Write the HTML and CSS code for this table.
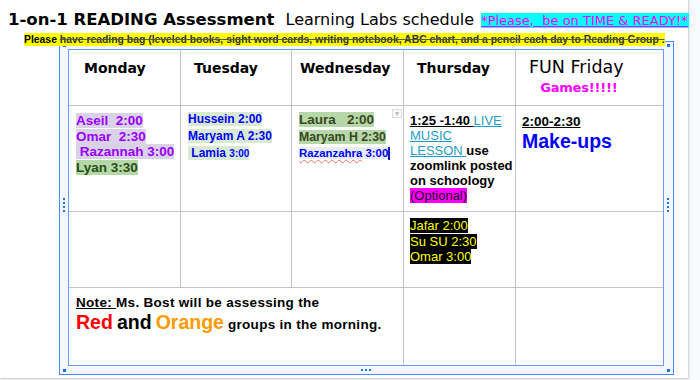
FILE: index.html
```html
<!DOCTYPE html>
<html>
<head>
<meta charset="utf-8">
<link rel="stylesheet" href="styles.css">
</head>
<body>
<div class="page">
  <div class="title">
    <span class="t-main">1-on-1 READING Assessment</span>
    <span class="t-sub">Learning Labs schedule</span>
    <span class="t-hl">*Please,&nbsp; be on TIME &amp; READY!*</span>
  </div>
  <div class="bag"><span>Please </span><span class="strike">have reading bag (leveled books, sight word cards, writing notebook, ABC chart, and a pencil each day to Reading Group .</span></div>
  <div class="frame">
    <div class="grid">
      <div class="cell head h-mon">Monday</div>
      <div class="cell head h-tue">Tuesday</div>
      <div class="cell head h-wed">Wednesday</div>
      <div class="cell head h-thu">Thursday</div>
      <div class="cell head h-fri last-col">
        <div class="fri-wrap">
          <div class="fun">FUN Friday</div>
          <div class="games">Games!!!!!</div>
        </div>
      </div>

      <div class="cell mon">
        <div><span class="lav">Aseil&nbsp; 2:00</span></div>
        <div><span class="lav">Omar&nbsp; 2:30</span></div>
        <div><span class="lav">&nbsp;Razannah 3:00</span></div>
        <div><span class="grn">Lyan 3:30</span></div>
      </div>
      <div class="cell tue">
        <div><span class="lg">Hussein 2:00</span></div>
        <div><span class="lg">Maryam A 2:30</span></div>
        <div><span class="lg">&nbsp;Lamia <small class="sm">3:00</small></span></div>
      </div>
      <div class="cell wed">
        <span class="dd">&#9662;</span>
        <div class="w1"><span class="grn2">Laura&nbsp;&nbsp; 2:00</span></div>
        <div class="w2"><span class="grn2">Maryam H 2:30</span></div>
        <div class="w3"><span class="pale"><span class="squig">Razanzahra</span> 3:00</span><span class="caret"></span></div>
      </div>
      <div class="cell thu">
        <span class="u">1:25 -1:40 </span><a class="link">LIVE<br>MUSIC<br>LESSON </a> use<br>zoomlink posted<br>on schoology<br><span class="opt">(Optional)</span>
      </div>
      <div class="cell fri last-col">
        <div class="fri-time"><span class="u">2:00-2:30</span></div>
        <div class="makeups">Make-ups</div>
      </div>

      <div class="cell"></div>
      <div class="cell"></div>
      <div class="cell"></div>
      <div class="cell thu2">
        <div><span class="blk">Jafar 2:00</span></div>
        <div><span class="blk">Su SU 2:30</span></div>
        <div><span class="blk">Omar 3:00</span></div>
      </div>
      <div class="cell last-col"></div>

      <div class="cell note last-row">
        <div class="n1"><span class="u">Note: </span>Ms. Bost will be assessing the</div>
        <div class="n2"><span class="big red">Red</span> <span class="big">and</span> <span class="big orange">Orange</span> groups in the morning.</div>
      </div>
      <div class="cell last-row"></div>
      <div class="cell last-row last-col"></div>
    </div>
    <span class="hd sq tl"></span>
    <span class="hd sq tr"></span>
    <span class="hd sq bl"></span>
    <span class="hd sq br"></span>
    <span class="hd vdots ml"></span>
    <span class="hd vdots mr"></span>
    <span class="hd hdots mt"></span>
    <span class="hd hdots mb"></span>
  </div>
</div>
</body>
</html>
```

FILE: styles.css
```css
* { box-sizing: border-box; }
html, body { margin: 0; padding: 0; }
body {
  background: #f8f9fa;
  width: 700px;
  height: 380px;
  overflow: hidden;
}
.page {
  width: 688px;
  height: 378px;
  background: #ffffff;
  box-shadow: 1px 0 0 #d6d6d6, 0 1px 0 #d0d0d0, 1px 1px 2px rgba(0,0,0,0.15);
  white-space: nowrap;
}
.title {
  height: 33px;
  padding: 10px 0 0 8px;
  line-height: 20px;
  font-family: "DejaVu Sans", sans-serif;
  color: #000;
}
.t-main {
  font-weight: bold;
  font-size: 16.5px;
}
.t-sub {
  font-size: 16px;
  margin-left: 6px;
}
.t-hl {
  font-size: 13px;
  background: #00ffff;
  color: #ff00ff;
  text-decoration: underline;
  margin-left: 2px;
  padding-right: 1px;
}
.bag {
  position: relative;
  z-index: 2;
  width: fit-content;
  margin-left: 24px;
  height: 13px;
  line-height: 13px;
  background: #ffff00;
  font-family: "Liberation Sans", Arial, sans-serif;
  font-weight: bold;
  font-size: 10.4px;
  color: #000;
}
.strike {
  text-decoration: line-through;
  text-decoration-color: #555;
  color: #333;
}
.frame {
  position: relative;
  margin: -5px 0 0 59px;
  width: 615px;
  height: 334px;
  border: 1px solid #4a89f3;
  background: #f4f8fe;
  padding: 7px 9px 8px 8px;
}
.grid {
  display: grid;
  grid-template-columns: 112px 111px 112px 112px 147px;
  grid-template-rows: 56px 106px 76px 77px;
  width: 596px;
  height: 317px;
  border: 1px solid #6a9cf0;
  background: #fff;
  font-family: "Liberation Sans", Arial, sans-serif;
  font-weight: bold;
  color: #000;
}
.cell {
  position: relative;
  border-right: 1px solid #c4c4c4;
  border-bottom: 1px solid #c4c4c4;
  padding: 7px 2px 0 7px;
  white-space: nowrap;
}
.last-col { border-right: none; }
.last-row { border-bottom: none; }

.head {
  font-family: "DejaVu Sans", sans-serif;
  font-weight: bold;
  font-size: 14px;
  line-height: 16px;
  padding-top: 10px;
}
.h-mon { padding-left: 15px; }
.h-tue { padding-left: 13px; }
.h-wed { padding-left: 8px; }
.h-thu { padding-left: 13px; }
.h-fri { padding-left: 13px; padding-top: 7px; }
.fri-wrap { display: inline-block; text-align: center; }
.fun {
  font-weight: normal;
  font-size: 17.5px;
  line-height: 20px;
}
.games {
  color: #ff00ff;
  font-size: 13px;
  line-height: 16px;
  margin-top: 3px;
  padding-left: 5px;
  letter-spacing: -0.2px;
}

.mon {
  font-size: 13.5px;
  line-height: 15.5px;
  padding-top: 7px;
}
.lav { background: #d9d2e9; color: #9900ff; }
.grn { background: #b6d7a8; color: #274e13; }

.tue {
  font-size: 12px;
  line-height: 17px;
  padding-top: 5px;
}
.lg { background: #d9ead3; color: #0000ff; }
.sm { font-size: 10px; }

.wed { padding-top: 6px; }
.wed > div { line-height: 16.6px; }
.w1 { font-size: 13.5px; }
.w2 { font-size: 12.3px; }
.w3 { font-size: 11.4px; }
.grn2 { background: #b6d7a8; color: #38461f; }
.pale { background: #e6eef3; color: #0000ff; }
.squig {
  text-decoration: underline wavy #e8726b;
  text-decoration-thickness: 1px;
  text-underline-offset: 2px;
}
.caret {
  display: inline-block;
  width: 2px;
  height: 13px;
  background: #1616b8;
  vertical-align: -3px;
}
.dd {
  position: absolute;
  right: 1px;
  top: 3px;
  width: 10px;
  height: 9px;
  border: 1px solid #dcdcdc;
  background: #fafafa;
  color: #bbb;
  font-size: 8px;
  line-height: 7px;
  text-align: center;
  font-weight: normal;
}

.thu {
  font-size: 13px;
  line-height: 15px;
  padding-left: 6px;
}
.u { text-decoration: underline; }
.link {
  font-weight: normal;
  color: #1f9dc4;
  text-decoration: underline;
}
.opt {
  font-weight: normal;
  background: #ff00ff;
  color: #1a001a;
}

.fri { padding-left: 6px; padding-top: 8px; }
.fri-time { font-size: 13.5px; line-height: 15.5px; }
.makeups {
  font-size: 19.5px;
  line-height: 23px;
  color: #0000ff;
}

.thu2 {
  font-weight: normal;
  font-size: 13px;
  line-height: 15.5px;
  padding-top: 6px;
  padding-left: 6px;
}
.blk { background: #000; color: #ffff00; }

.note {
  grid-column: span 3;
  padding-top: 7px;
  font-size: 13.5px;
  letter-spacing: 0.3px;
}
.n1 { line-height: 16px; }
.n2 { line-height: 22px; }
.big { font-size: 19.5px; letter-spacing: 0; }
.red { color: #ff0000; }
.orange { color: #ff9900; }

.hd { position: absolute; }
.sq {
  width: 3px;
  height: 3px;
  background: #1a73e8;
}
.tl { left: 3px; top: 2px; }
.tr { left: 607px; top: 2px; }
.bl { left: 3px; top: 327px; }
.br { left: 607px; top: 327px; }
.vdots, .hdots {
  width: 2px;
  height: 2px;
  background: #1a73e8;
}
.vdots { box-shadow: 0 4px 0 #1a73e8, 0 8px 0 #1a73e8, 0 12px 0 #1a73e8; }
.hdots { box-shadow: 4px 0 0 #1a73e8, 8px 0 0 #1a73e8; }
.ml { left: 3px; top: 156px; }
.mr { left: 607px; top: 156px; }
.mt { left: 301px; top: 2px; }
.mb { left: 301px; top: 327px; }
```
